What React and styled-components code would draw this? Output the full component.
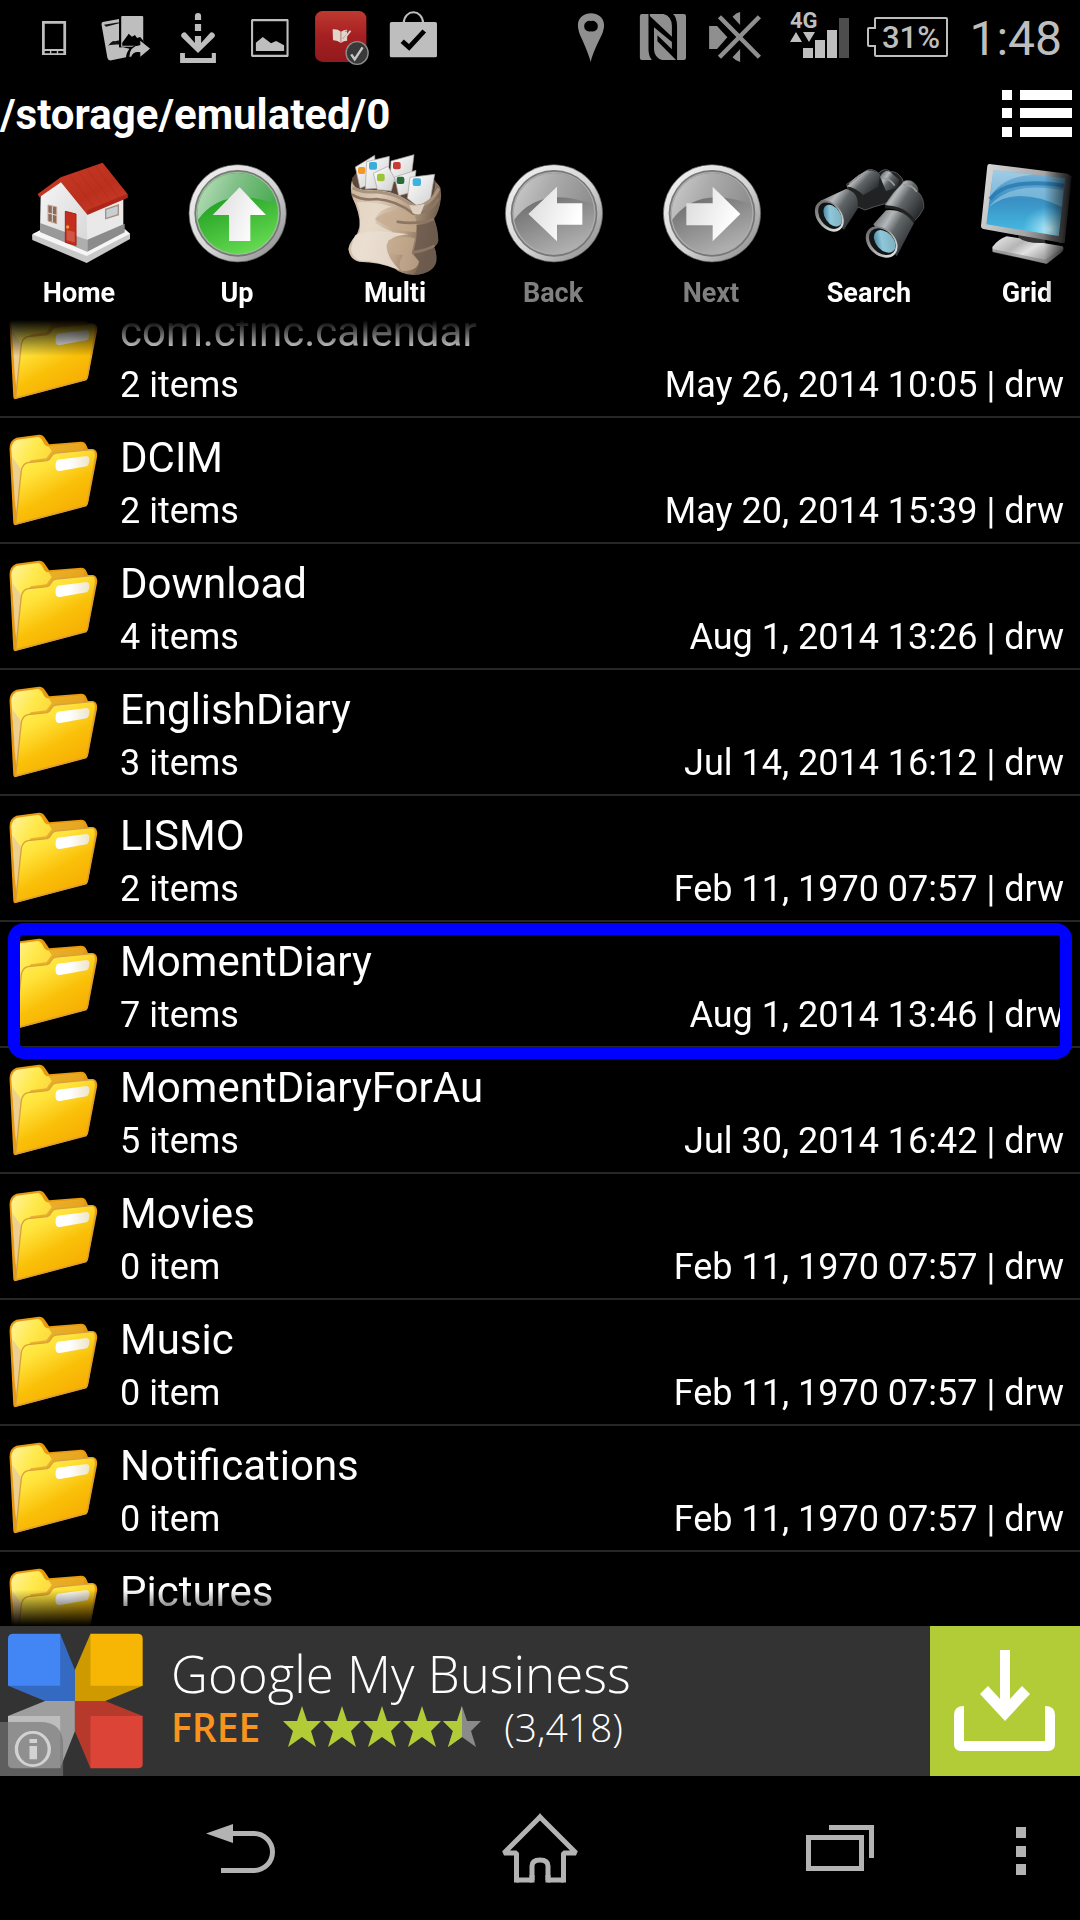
import React from "react";
import styled, { createGlobalStyle } from "styled-components";

const GlobalStyle = createGlobalStyle`
  * { box-sizing: border-box; }
  body { margin: 0; background: #000; color: #fff; font-family: Roboto, "Noto Sans", sans-serif; }
  button { border: 0; padding: 0; background: none; color: inherit; font: inherit; text-align: left; cursor: pointer; }
  a { color: inherit; text-decoration: none; }
  svg { display: block; flex: none; }
`;

const Screen = styled.div`
  display: flex;
  flex-direction: column;
  height: 100vh;
  overflow: hidden;
`;

/* ---------- status bar ---------- */

const StatusBar = styled.header`
  display: flex;
  justify-content: space-between;
  height: 75px;
  padding: 0 18px;
  flex: none;
`;

const StatusGroup = styled.div`
  display: flex;
`;

const Clock = styled.time`
  padding-left: 20px;
  font-size: 48px;
  line-height: 78px;
  color: #bebebe;
`;

/* ---------- path and toolbar ---------- */

const PathBar = styled.div`
  display: flex;
  align-items: center;
  justify-content: space-between;
  height: 75px;
  padding: 4px 8px 0 0;
  flex: none;
`;

const PathTitle = styled.h1`
  margin: 0;
  font-size: 42px;
  line-height: 48px;
  font-weight: 700;
`;

const Toolbar = styled.nav`
  display: flex;
  height: 170px;
  flex: none;
  overflow: hidden;
  mask-image: linear-gradient(to left, transparent, #000 36px);
`;

const Tool = styled.button`
  display: flex;
  flex-direction: column;
  align-items: center;
  flex: none;
  width: 158px;
  font-size: 27px;
  line-height: 26px;
  font-weight: 700;
  color: ${(p) => (p.disabled ? "#808080" : "#fff")};
`;

/* ---------- file list ---------- */

const ListViewport = styled.main`
  flex: 1;
  min-height: 0;
  overflow: hidden;
  mask-image: linear-gradient(to bottom, transparent, #000 36px, #000 calc(100% - 36px), transparent);
`;

const FileList = styled.ul`
  list-style: none;
  margin: -28px 0 0;
  padding: 0;
`;

const FileItem = styled.li`
  position: relative;
  height: 126px;
  border-bottom: 2px solid #262626;
`;

const FileButton = styled.button`
  display: flex;
  width: 100%;
  padding: 12px 16px 0 0;
`;

const FileInfo = styled.span`
  display: flex;
  flex: 1;
  flex-direction: column;
  gap: 7px;
  padding: 4px 0 0 15px;
`;

const FileName = styled.span`
  font-size: 42px;
  line-height: 48px;
`;

const FileMeta = styled.span`
  display: flex;
  justify-content: space-between;
  font-size: 36px;
  line-height: 44px;
`;

const Highlight = styled.span`
  position: absolute;
  z-index: 1;
  inset: 1px 8px -13px;
  border: 12px solid #00f;
  border-radius: 16px;
  pointer-events: none;
`;

/* ---------- advert ---------- */

const Ad = styled.aside`
  display: flex;
  height: 150px;
  flex: none;
  background: #333;
  font-family: "Open Sans", "Noto Sans", sans-serif;
`;

const AdBody = styled.a`
  display: flex;
  flex: 1;
`;

const AdText = styled.span`
  display: flex;
  flex-direction: column;
  padding: 19px 0 0 21px;
`;

const AdTitle = styled.span`
  font-size: 51px;
  line-height: 56px;
  font-weight: 300;
`;

const AdRating = styled.span`
  display: flex;
  align-items: center;
  font-size: 39px;
  line-height: 52px;
  font-weight: 300;
`;

const Price = styled.span`
  color: #f7931e;
  font-weight: 600;
`;

const Stars = styled.span`
  display: flex;
  padding: 0 22px;
`;

const Install = styled.a`
  display: grid;
  place-items: center;
  width: 150px;
  background: #b2cc38;
`;

/* ---------- navigation bar ---------- */

const NavBar = styled.nav`
  display: flex;
  height: 144px;
  padding: 0 28px 0 90px;
  flex: none;
`;

const NavButton = styled.button`
  display: grid;
  place-items: center;
  flex: 1;
`;

const MenuButton = styled(NavButton)`
  flex: none;
  width: 62px;
`;

/* ---------- drawings ---------- */

const Glyph = ({ w = 72, h = 75, box, children }) => (
  <svg width={w} height={h} viewBox={box} preserveAspectRatio="none" aria-hidden="true">
    {children}
  </svg>
);

const G = "#bebebe";
const D = "#8f8f8f";

const StatusIcons = () => (
  <>
    <StatusGroup>
      <Glyph box="52.3 0 209.1 225">
        <path fill={G} fillRule="evenodd" d="M122 63h70v102h-70zM130 71v76h54V71zM130 153v7h15v-7zM149 153v7h16v-7zM169 153v7h15v-7z" />
      </Glyph>
      <Glyph box="261.4 0 209.1 225">
        <path fill={G} d="M298 66 346 57V142H358L376 146Q366 160 366 172L324 181Q314 183 312 174L295 74Q294 68 298 66Z" />
        <path fill="#000" d="M302 74 346 67V70L308 80ZM346 57H352V142H346ZM314 138Q326 120 334 124L346 121V133L314 136Z" opacity=".9" />
        <path fill={G} d="M355 48H413Q416 48 416 51V140H352V51Q352 48 355 48Z" />
        <path fill="#000" d="M355 128 374 101 383 110 392 105 398 114 407 111 416 122V137H355Z" />
        <path fill={G} stroke="#000" strokeWidth="3" d="M374 172Q374 137 406 134V119L438 146 406 174V158Q386 156 382 172Z" />
      </Glyph>
      <Glyph box="470.4 0 209.1 225">
        <path fill={G} d="M566 60V48Q566 39 575 39Q584 39 584 48V60ZM566 72H584V93H566ZM566 108H584V129L608 101Q614 94 620 99Q627 105 622 112L575 159 528 112Q523 105 530 99Q536 94 542 101L566 129ZM523 159H537V174H615V159H627V189H523Z" />
      </Glyph>
      <Glyph box="679.5 0 209.1 225">
        <path fill={G} fillRule="evenodd" d="M732 57H836L838 60V168L836 171H732L729 168V60ZM735 64V164H832V64ZM743 153V128L763 111 787 130 802 123 825 136V153Z" />
      </Glyph>
      <Glyph box="888.6 0 209.1 225">
        <defs>
          <linearGradient id="app" x2="0" y2="1"><stop stopColor="#be3a2f" /><stop offset=".5" stopColor="#a51f22" /><stop offset="1" stopColor="#91191d" /></linearGradient>
        </defs>
        <rect x="915" y="33" width="149" height="153" rx="22" fill="url(#app)" />
        <path fill="#e0d5cc" d="M966 88Q980 86 990 95Q1000 88 1008 89V122Q998 122 990 129Q979 120 967 121Z" />
        <path stroke="#9b4a3e" strokeWidth="2" fill="none" d="M990 94V128M1002 94 1018 92 996 116" />
        <path stroke="#e0d5cc" strokeWidth="5" d="M1000 116 1018 92" />
        <ellipse cx="1037" cy="159" rx="32" ry="34" fill="#393939" stroke="#8c8c8c" strokeWidth="4" />
        <path d="M1020 163 1030 178 1053 142" fill="none" stroke="#c8c8c8" strokeWidth="7" />
      </Glyph>
      <Glyph box="1097.7 0 209.1 225">
        <path d="M1172 70C1174 26 1227 26 1229 70" fill="none" stroke={G} strokeWidth="6" />
        <rect x="1132" y="66" width="137" height="106" rx="5" fill={G} />
        <path d="M1168 124 1188 142 1232 93" fill="none" stroke="#000" strokeWidth="14" />
      </Glyph>
    </StatusGroup>
    <StatusGroup>
      <Glyph box="46.5 0 209.1 225">
        <path fill={D} fillRule="evenodd" d="M150 186Q144 162 125 118Q113 94 113 76C113 28 189 28 189 76Q189 94 176 118Q155 162 150 186ZM151 63A16 16 0 1 0 151 94A16 16 0 1 0 151 63Z" />
      </Glyph>
      <Glyph box="255.6 0 209.1 225">
        <path fill={D} d="M299 42H318V150Q319 170 328 180H299Q293 180 293 173V49Q293 42 299 42ZM322 42H362Q385 48 386 78V110L322 48ZM389 42H421Q427 42 427 49V173Q427 180 421 180H401V78Q400 50 389 42ZM334 82 386 126V148L344 106V124L398 180H358Q335 174 334 148Z" />
      </Glyph>
      <Glyph box="464.6 0 209.1 225">
        <path fill={D} d="M494 78H517L547 112 517 147H494ZM562 50Q572 38 584 36V75ZM562 172 584 147V186Q572 184 562 172Z" />
        <path d="M524 50 640 172M640 50 524 172" stroke={D} strokeWidth="13" />
      </Glyph>
      <svg width="96" height="75" viewBox="772 0 96 75" role="img" aria-label="Mobile signal">
        <text x="791" y="28" fontSize="22" fontWeight="700" fill={G}>4G</text>
        <path fill={G} d="M791 42 797 32 803 42ZM804 32H816L810 42ZM804 48H814V58H804ZM816 40H826V58H816ZM828 30H838V58H828Z" />
        <path fill="#4d4d4d" d="M840 18H850V58H840Z" />
      </svg>
      <svg width="82" height="75" viewBox="868 0 82 75" role="img" aria-label="Battery">
        <path fill="none" stroke={G} strokeWidth="2" d="M877 18H947Q948 18 948 19V55Q948 56 947 56H877Q876 56 876 55V46H870Q869 46 869 45V29Q869 28 870 28H876V19Q876 18 877 18Z" />
        <text x="883" y="48" fontSize="31" fontWeight="500" fill={G}>31%</text>
      </svg>
      <Clock>1:48</Clock>
    </StatusGroup>
  </>
);

const HomeArt = () => (
  <Glyph w={120} h={130} box="57 15 360 390">
    <defs>
      <linearGradient id="roof" x2="1" y2="1"><stop stopColor="#c83a26" /><stop offset=".6" stopColor="#bb301d" /><stop offset="1" stopColor="#d03d2d" /></linearGradient>
      <linearGradient id="wall" x2="1" y2="1"><stop stopColor="#f5f5f5" /><stop offset="1" stopColor="#d6d6d6" /></linearGradient>
    </defs>
    <path fill="#c8c8c8" d="M96 270 122 255 375 252 390 266V282L260 354 97 285Z" />
    <path fill="#f6f6f6" d="M96 268 122 255 262 315 374 254 390 266 260 333Z" />
    <path fill="url(#wall)" d="M122 150 183 108 262 205V319L120 260Z" />
    <path fill="#e9e9e9" d="M260 200 370 155V258L262 319Z" />
    <path fill="#999" d="M120 234 262 285V320L120 261Z" />
    <path fill="#8b8b8b" d="M262 284 374 236V262L262 320Z" />
    <path fill="#f1f1f1" d="M230 272 262 286V321L230 305Z" opacity=".25" />
    <path fill="url(#roof)" d="M182 97 308 53 383 148V158L262 209 183 112 118 157 113 147Z" />
    <path stroke="#99220f" strokeWidth="2" fill="none" opacity=".4" d="M210 90 287 194M235 80 312 184M260 70 337 174M285 61 361 165" />
    <path fill="#9d1d12" d="M262 196 383 146V158L262 210Z" opacity=".6" />
    <path fill="#c52e1e" stroke="#a82013" strokeWidth="3" d="M196 199 228 207V301L196 292Z" />
    <path fill="#d8705c" d="M200 255 224 261V292L200 286Z" opacity=".6" />
    <circle cx="203" cy="246" r="5" fill="#e1a92e" />
    <path fill="#8c6b5d" stroke="#c7a492" strokeWidth="3" d="M144 180 170 186V236L144 228Z" />
    <path stroke="#ddd" strokeWidth="3" d="M157 184V231M144 204 170 211" />
    <path fill="#c8cfd2" stroke="#a98e81" strokeWidth="4" d="M317 193 355 180V209L317 221Z" />
  </Glyph>
);

const RoundArrow = ({ id, cx, box, green, children }) => (
  <Glyph w={120} h={130} box={box}>
    <defs>
      <linearGradient id={id + "r"} x2="1" y2="1"><stop stopColor="#f4f4f4" /><stop offset=".55" stopColor="#d4d4d4" /><stop offset="1" stopColor="#808080" /></linearGradient>
      <linearGradient id={id + "b"} x1=".3" x2=".7" y2="1"><stop offset=".3" stopColor={green ? "#28a428" : "#747474"} /><stop offset="1" stopColor={green ? "#67dd52" : "#b4b4b4"} /></linearGradient>
      <linearGradient id={id + "g"} x2="1" y2=".3"><stop stopColor={green ? "#c9e9c9" : "#d4d4d4"} /><stop offset=".5" stopColor={green ? "#83c18a" : "#ababab"} /><stop offset="1" stopColor={green ? "#4aac52" : "#8f8f8f"} /></linearGradient>
      <linearGradient id={id + "a"} x2="1" y2=".4"><stop stopColor="#dadada" /><stop offset="1" stopColor="#fff" /></linearGradient>
      <clipPath id={id + "c"}><circle cx={cx} cy="205" r="121" /></clipPath>
    </defs>
    <circle cx={cx} cy="205" r="146" fill={`url(#${id}r)`} stroke="#555" strokeWidth="2" />
    <circle cx={cx} cy="205" r="130" fill="#777" />
    <circle cx={cx} cy="205" r="125" fill={green ? "#9bbf9b" : "#adadad"} />
    <circle cx={cx} cy="205" r="121" fill={`url(#${id}b)`} />
    <path clipPath={`url(#${id}c)`} fill={`url(#${id}g)`} d={`M${cx - 130} 240Q${cx - 50} 110 ${cx + 130} 183V70H${cx - 130}Z`} />
    <g fill={`url(#${id}a)`}>{children}</g>
  </Glyph>
);

const SackArt = () => (
  <Glyph w={120} h={130} box="1005 15 360 390">
    <defs>
      <linearGradient id="sack" x2="1" y2=".3"><stop stopColor="#c8b29a" /><stop offset=".35" stopColor="#dccbb8" /><stop offset=".7" stopColor="#b89e84" /><stop offset="1" stopColor="#6e5b4b" /></linearGradient>
      <linearGradient id="env" x2="1" y2="1"><stop stopColor="#fff" /><stop offset="1" stopColor="#cfcfcf" /></linearGradient>
    </defs>
    <path fill="#5a4738" d="M1056 100 1070 82 1300 100 1322 130 1300 180 1240 195 1060 135Z" />
    <g fill="url(#env)" stroke="#a79f99" strokeWidth="2">
      <path d="M1066 66 1124 31 1128 110 1080 130Z" />
      <path d="M1173 48 1242 29 1232 110 1170 110Z" />
      <path d="M1100 50 1168 34 1166 90 1140 130 1096 132Z" />
      <path d="M1120 85 1164 64 1184 100 1174 138 1132 134Z" />
      <path d="M1184 96 1248 76 1240 140 1196 152Z" />
      <path d="M1230 97 1304 88 1290 170 1250 182 1222 160Z" />
    </g>
    <g>
      <rect x="1074" y="66" width="22" height="21" rx="6" fill="#f19a2a" />
      <rect x="1107" y="51" width="24" height="23" rx="6" fill="#3cacd8" />
      <rect x="1179" y="51" width="23" height="22" rx="6" fill="#c73b35" />
      <rect x="1131" y="86" width="23" height="23" rx="6" fill="#9bc536" />
      <rect x="1190" y="95" width="23" height="22" rx="6" fill="#276b37" />
      <rect x="1238" y="100" width="25" height="23" rx="6" fill="#3fb1df" />
    </g>
    <path fill="url(#sack)" d="M1056 105Q1058 132 1090 134Q1180 132 1225 168Q1245 186 1268 176Q1306 160 1306 112Q1326 120 1323 160Q1318 200 1302 222Q1314 250 1315 285Q1315 298 1302 306Q1312 325 1309 350Q1300 385 1240 390Q1200 386 1185 371Q1140 352 1078 350Q1050 345 1045 312Q1050 285 1078 262Q1085 215 1058 160Q1048 132 1056 105Z" />
    <path fill="#eee4d8" d="M1066 270Q1110 250 1225 268Q1170 272 1160 300Q1158 335 1200 376Q1140 350 1078 346Q1046 330 1056 300Q1058 285 1066 270Z" opacity=".8" />
    <path fill="#e9ddce" d="M1070 172Q1120 168 1175 185Q1120 200 1128 235Q1150 250 1180 262Q1100 270 1070 270Q1092 220 1070 172Z" opacity=".75" />
    <path fill="#c6ab8d" d="M1124 222Q1160 190 1240 200 1254 230 1248 262Q1180 262 1124 222ZM1165 285Q1210 270 1245 280L1235 325 1258 350Q1250 380 1204 378Q1190 360 1210 330Q1165 330 1160 310Z" opacity=".75" />
    <path fill="#6c5a4e" d="M1250 240Q1290 238 1302 222Q1315 260 1313 290Q1300 302 1240 320Q1252 285 1250 240ZM1240 326Q1290 320 1304 308Q1314 340 1300 368Q1280 388 1240 390Q1260 365 1256 345Z" opacity=".85" />
    <path fill="none" stroke="#8d7764" strokeWidth="8" d="M1056 148Q1085 168 1130 162Q1190 166 1240 206Q1290 206 1316 160M1190 230Q1250 240 1302 222M1236 322Q1280 316 1304 302" />
    <path fill="none" stroke="#a8937f" strokeWidth="9" d="M1058 128Q1085 144 1120 140Q1190 142 1245 186Q1295 180 1316 130" />
    <path fill="#ddd0c2" d="M1228 180Q1250 184 1274 176L1262 206Q1250 212 1238 204Z" />
  </Glyph>
);

const SearchArt = () => (
  <Glyph w={120} h={130} box="117 15 360 390">
    <defs>
      <linearGradient id="tube" x2="1" y2=".7"><stop stopColor="#4d5153" /><stop offset=".35" stopColor="#b4b8ba" /><stop offset=".55" stopColor="#606568" /><stop offset="1" stopColor="#25282a" /></linearGradient>
      <linearGradient id="lens" x2="1" y2="1"><stop stopColor="#2a6685" /><stop offset=".4" stopColor="#8fc7da" /><stop offset="1" stopColor="#77acb9" /></linearGradient>
      <linearGradient id="rim" x2="0" y2="1"><stop stopColor="#6c6c6c" /><stop offset="1" stopColor="#e0e0e0" /></linearGradient>
    </defs>
    <path fill="#202224" stroke="#555" strokeWidth="3" d="M230 118 290 76Q305 68 326 84Q345 66 362 80Q380 78 396 100Q400 112 404 120L366 160 345 176Q310 185 285 195L250 180Z" />
    <path fill="url(#tube)" d="M230 124 288 78Q310 72 330 88L325 125 280 150Q255 128 230 124Z" />
    <path fill="url(#tube)" d="M330 95Q345 70 362 82L388 105 380 128 348 138Z" />
    <path fill="url(#tube)" stroke="#6a6a6a" strokeWidth="2" d="M396 116Q402 102 424 108Q445 120 444 140Q464 160 461 190Q450 215 430 230Q395 190 345 180Q370 140 396 116Z" />
    <path fill="none" stroke="#999" strokeWidth="5" d="M238 118Q265 88 295 78M340 100Q360 100 374 122M400 120Q425 118 440 140" />
    <path fill="url(#tube)" d="M150 168 228 132Q270 140 270 180L222 254Q190 230 150 168Z" />
    <path fill="url(#tube)" d="M310 238 348 196Q400 190 432 234L380 334Z" />
    <path fill="none" stroke="#222" strokeWidth="9" d="M236 130Q270 140 268 184M345 186Q400 184 434 230" />
    <ellipse cx="178" cy="213" rx="37" ry="52" transform="rotate(-38 178 213)" fill="url(#rim)" />
    <ellipse cx="180" cy="212" rx="30" ry="44" transform="rotate(-36 180 212)" fill="#121516" />
    <ellipse cx="188" cy="212" rx="23" ry="36" transform="rotate(-34 188 212)" fill="url(#lens)" />
    <ellipse cx="335" cy="291" rx="40" ry="54" transform="rotate(-46 335 291)" fill="url(#rim)" />
    <ellipse cx="337" cy="290" rx="33" ry="46" transform="rotate(-45 337 290)" fill="#121516" />
    <ellipse cx="344" cy="289" rx="26" ry="39" transform="rotate(-42 344 289)" fill="url(#lens)" />
  </Glyph>
);

const GridArt = () => (
  <Glyph w={120} h={130} box="591 15 360 390">
    <defs>
      <linearGradient id="bezel" x2="1" y2=".3"><stop stopColor="#dcdcdc" /><stop offset=".7" stopColor="#a5a5a5" /><stop offset="1" stopColor="#606060" /></linearGradient>
      <linearGradient id="scr" x2="0" y2="1"><stop stopColor="#7db6da" /><stop offset=".45" stopColor="#3a8fc3" /><stop offset="1" stopColor="#45bfe5" /></linearGradient>
      <linearGradient id="foot" x2="1" y2=".6"><stop stopColor="#eee" /><stop offset=".4" stopColor="#b5b5b5" /><stop offset=".6" stopColor="#e2e2e2" /><stop offset="1" stopColor="#888" /></linearGradient>
      <radialGradient id="shine" cx=".8" cy=".9" r=".35"><stop stopColor="#c4ecf8" /><stop offset="1" stopColor="#8fdcf2" stopOpacity="0" /></radialGradient>
    </defs>
    <path fill="#333" d="M745 260 822 275 830 305 745 295Z" />
    <path fill="url(#foot)" d="M667 306Q685 282 710 274L748 280Q770 296 820 294L878 304Q884 312 876 320L830 356 668 320Z" />
    <path fill="#777" d="M667 312 825 344 878 310 876 322 830 357 668 322Z" opacity=".5" />
    <path fill="#555" d="M890 86 905 94 884 294 868 294Z" />
    <path fill="url(#bezel)" d="M658 57 893 86Q902 90 899 98L878 288Q874 294 866 292L640 252Q632 250 633 242L652 62Q653 57 658 57Z" />
    <path fill="url(#scr)" d="M670 75 886 100 866 273 649 238Z" />
    <path fill="#cde6f4" opacity=".45" d="M670 75 790 89Q690 95 660 160Z" />
    <path fill="#8fc4e0" opacity=".7" d="M656 186Q720 105 880 136L876 186Q740 120 656 186Z" />
    <path fill="none" stroke="#2779b1" strokeWidth="12" opacity=".8" d="M660 162Q710 96 882 122" />
    <path fill="url(#shine)" d="M670 75 886 100 866 273 649 238Z" />
  </Glyph>
);

const Folder = () => (
  <Glyph w={105} h={100} box="2 389 308 300">
    <path fill="#e99a0e" d="M30 445Q30 420 50 412L116 403Q128 402 134 414L146 432 240 424Q252 424 256 436L260 446 276 447Q288 450 287 468L260 610 256 618 48 674Q42 676 41 668Z" />
    <path fill="url(#folderBack)" d="M35 445Q36 426 52 418L112 410Q122 410 128 424Q134 438 144 438L240 430Q250 430 250 446L80 530 50 640Z" />
    <path fill="#e7c9a0" d="M38 470 66 510 50 640 45 600Z" opacity=".8" />
    <path fill="#d98b16" d="M144 438 245 430 256 450 160 462 145 482 85 490 92 480 138 474 154 452Z" opacity=".55" />
    <path fill="url(#folderFront)" stroke="#d9a13c" strokeWidth="4" d="M48 671 64 515Q67 490 84 487L140 481Q148 478 152 469Q156 460 166 458L272 448Q284 450 282 470L258 608Q257 614 251 616Z" />
    <path fill="url(#folderLabel)" d="M172 478 256 467Q266 468 264 480Q264 494 256 498L178 512Q166 514 165 500Q164 482 172 478Z" />
  </Glyph>
);

const Defs = styled.svg`
  position: absolute;
`;

const FolderDefs = () => (
  <Defs width="0" height="0" aria-hidden="true">
    <defs>
      <linearGradient id="folderBack" x2="1" y2=".6"><stop stopColor="#fff3a0" /><stop offset=".3" stopColor="#ffe94a" /><stop offset="1" stopColor="#f6b31b" /></linearGradient>
      <linearGradient id="folderFront" x1=".1" x2=".7" y2="1"><stop stopColor="#fff65a" /><stop offset=".3" stopColor="#ffe23a" /><stop offset=".6" stopColor="#fac008" /><stop offset="1" stopColor="#f5a702" /></linearGradient>
      <linearGradient id="folderLabel" x2="1"><stop stopColor="#fff" /><stop offset=".4" stopColor="#fff" /><stop offset="1" stopColor="#eee6c9" /></linearGradient>
    </defs>
  </Defs>
);

const AdLogo = () => (
  <Glyph w={150} h={150} box="0 258 356.4 450">
    <path fill="#356ac3" d="M143 281 178 390V483H107L19 437 130 330Z" />
    <path fill="#cf9a00" d="M215 281 178 390V483H250L339 437 230 330Z" />
    <path fill="#9e9e9e" d="M143 685 178 574V483H107L19 528 130 630Z" />
    <path fill="#b7392c" d="M215 685 178 574V483H250L339 528 230 630Z" />
    <path fill="#4285f4" d="M32 281H143V437H19V296Q19 281 32 281Z" />
    <path fill="#f7b604" d="M215 281H327Q339 281 339 296V437H215Z" />
    <path fill="#bdbdbd" d="M19 528H143V685H32Q19 685 19 672Z" />
    <path fill="#db4437" d="M215 528H339V672Q339 685 327 685H215Z" />
    <path fill="#777" opacity=".65" d="M0 546H95Q150 546 150 615V708H0Z" />
    <ellipse cx="78" cy="627" rx="39" ry="50" fill="none" stroke="#d2d2d2" strokeWidth="8" />
    <path fill="#d2d2d2" d="M70 597H88V609H70ZM70 618H88V658H70Z" />
  </Glyph>
);

const starPath = "M20 0 25 15 39 15 29 25 34 41 20 31 6 41 11 25 1 15 15 15Z";
const Star = ({ half }) => (
  <svg width="40" height="42" viewBox="0 0 40 42" aria-hidden="true">
    <path d={starPath} fill={half ? "#8a8a8a" : "#b2cc38"} />
    {half && <path d="M20 0 15 15 1 15 11 25 6 41 20 31Z" fill="#b2cc38" />}
  </svg>
);

/* ---------- data ---------- */

const tools = [
  { label: "Home", art: <HomeArt /> },
  { label: "Up", art: <RoundArrow id="up" cx={713} box="531 15 360 390" green><path d="M719 127 798 210H751V288H687V210H638Z" /></RoundArrow> },
  { label: "Multi", art: <SackArt /> },
  { label: "Back", off: true, art: <RoundArrow id="bk" cx={282} box="99 15 360 390"><path d="M205 207 291 125V175H367V239H291V289Z" /></RoundArrow> },
  { label: "Next", off: true, art: <RoundArrow id="nx" cx={756} box="573 15 360 390"><path d="M841 207 758 125V175H679V241H758V289Z" /></RoundArrow> },
  { label: "Search", art: <SearchArt /> },
  { label: "Grid", art: <GridArt /> },
];

const files = [
  ["com.cfinc.calendar", "2 items", "May 26, 2014 10:05"],
  ["DCIM", "2 items", "May 20, 2014 15:39"],
  ["Download", "4 items", "Aug 1, 2014 13:26"],
  ["EnglishDiary", "3 items", "Jul 14, 2014 16:12"],
  ["LISMO", "2 items", "Feb 11, 1970 07:57"],
  ["MomentDiary", "7 items", "Aug 1, 2014 13:46"],
  ["MomentDiaryForAu", "5 items", "Jul 30, 2014 16:42"],
  ["Movies", "0 item", "Feb 11, 1970 07:57"],
  ["Music", "0 item", "Feb 11, 1970 07:57"],
  ["Notifications", "0 item", "Feb 11, 1970 07:57"],
  ["Pictures"],
];

export default function App() {
  return (
    <Screen>
      <GlobalStyle />
      <FolderDefs />
      <StatusBar>
        <StatusIcons />
      </StatusBar>
      <PathBar>
        <PathTitle>/storage/emulated/0</PathTitle>
        <button aria-label="View options">
          <svg width="70" height="52" viewBox="0 0 70 52" fill="#fff">
            <path d="M0 1H10V11H0ZM18 1H70V11H18ZM0 19H10V29H0ZM18 19H70V29H18ZM0 38H10V48H0ZM18 38H70V48H18Z" />
          </svg>
        </button>
      </PathBar>
      <Toolbar aria-label="File actions">
        {tools.map((t) => (
          <Tool key={t.label} disabled={t.off}>
            {t.art}
            {t.label}
          </Tool>
        ))}
      </Toolbar>
      <ListViewport>
        <FileList>
          {files.map(([name, count, date]) => (
            <FileItem key={name}>
              <FileButton>
                <Folder />
                <FileInfo>
                  <FileName>{name}</FileName>
                  {date && (
                    <FileMeta>
                      <span>{count}</span>
                      <span>{date} | drw</span>
                    </FileMeta>
                  )}
                </FileInfo>
              </FileButton>
              {name === "MomentDiary" && <Highlight />}
            </FileItem>
          ))}
        </FileList>
      </ListViewport>
      <Ad>
        <AdBody href="#business">
          <AdLogo />
          <AdText>
            <AdTitle>Google My Business</AdTitle>
            <AdRating>
              <Price>FREE</Price>
              <Stars>
                <Star />
                <Star />
                <Star />
                <Star />
                <Star half />
              </Stars>
              <span>(3,418)</span>
            </AdRating>
          </AdText>
        </AdBody>
        <Install href="#install" aria-label="Install">
          <svg width="102" height="102" viewBox="0 0 102 102" fill="#fff">
            <path d="M46 0H56V49L68 36 76 44 51 71 26 44 34 36 46 49ZM10 56V91H91V56Q101 56 101 65V94Q101 101 94 101H7Q0 101 0 94V65Q0 56 10 56Z" />
          </svg>
        </Install>
      </Ad>
      <NavBar aria-label="System">
        <NavButton aria-label="Back">
          <svg width="70" height="50" viewBox="0 0 70 50">
            <path fill="#b3b3b3" d="M1 10.500 28 1V20Z" />
            <path fill="none" stroke="#b3b3b3" strokeWidth="5" d="M27 10.500H49A18 18 0 0 1 49 47.500H16" />
          </svg>
        </NavButton>
        <NavButton aria-label="Home">
          <svg width="80" height="70" viewBox="0 0 80 70">
            <path fill="none" stroke="#b3b3b3" strokeWidth="5" strokeLinejoin="bevel" d="M40 4 4 40H16.500V67H32V53Q32 47 40 47Q48 47 48 53V67H63.500V40H76Z" />
            <path fill="#b3b3b3" d="M37 4 40 0 43 4ZM14 62H19V69.500H14ZM29.500 62H34.500V69.500H29.500ZM45.500 62H50.500V69.500H45.500ZM61 62H66V69.500H61Z" />
          </svg>
        </NavButton>
        <NavButton aria-label="Recent apps">
          <svg width="68" height="46" viewBox="0 0 68 46">
            <path fill="none" stroke="#b3b3b3" strokeWidth="5" d="M2.500 12.500H55.500V43.500H2.500ZM23 2.500H65.500V33" />
          </svg>
        </NavButton>
        <MenuButton aria-label="Menu">
          <svg width="11" height="54" viewBox="0 0 11 54" fill="#b3b3b3">
            <path d="M0 6H10V17H0ZM0 25H10V36H0ZM0 43H10V54H0Z" />
          </svg>
        </MenuButton>
      </NavBar>
    </Screen>
  );
}
